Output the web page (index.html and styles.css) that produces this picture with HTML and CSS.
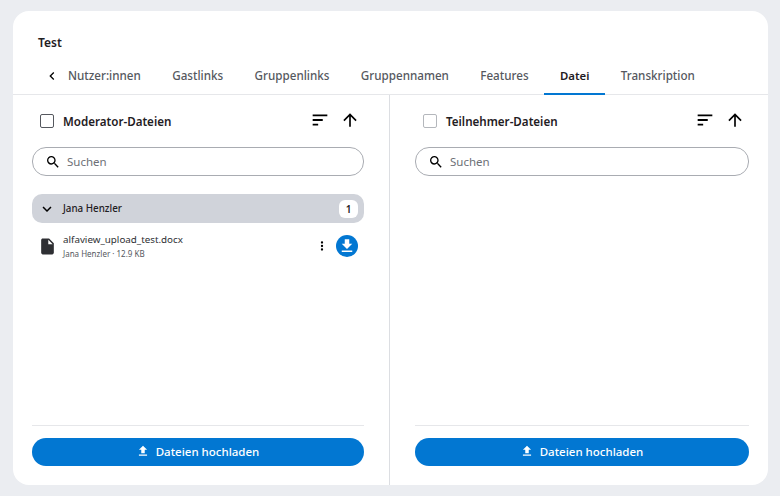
FILE: index.html
```html
<!DOCTYPE html>
<html lang="de">
<head>
    <meta charset="UTF-8">
    <meta name="viewport" content="width=device-width, initial-scale=1.0">
    <title>Test</title>
    <link rel="stylesheet" href="styles.css">
</head>
<body>
    <div class="card">
        <h1 class="card-title">Test</h1>

        <div class="tabs">
            <button class="tab-arrow">
                <svg width="16" height="16" viewBox="0 0 24 24"><path d="M15.4 7.4 14 6l-6 6 6 6 1.4-1.4L10.8 12z"/></svg>
            </button>
            <div class="tab">Nutzer:innen</div>
            <div class="tab">Gastlinks</div>
            <div class="tab">Gruppenlinks</div>
            <div class="tab">Gruppennamen</div>
            <div class="tab">Features</div>
            <div class="tab active">Datei</div>
            <div class="tab">Transkription</div>
        </div>

        <div class="panels">
            <section class="panel panel-left">
                <div class="panel-head">
                    <span class="checkbox"></span>
                    <span class="panel-title">Moderator-Dateien</span>
                    <svg class="sort-icon" width="24" height="24" viewBox="0 0 24 24"><path d="M4 6h16v2H4zM4 11h11v2H4zM4 16h6v2H4z"/></svg>
                    <svg class="up-icon" width="24" height="24" viewBox="0 0 24 24"><path d="M4 12l1.41 1.41L11 7.83V20h2V7.83l5.58 5.59L20 12l-8-8z"/></svg>
                </div>

                <div class="search">
                    <svg width="16" height="16" viewBox="0 0 24 24"><path d="M15.5 14h-.79l-.28-.27A6.47 6.47 0 0 0 16 9.5 6.5 6.5 0 1 0 9.5 16c1.61 0 3.09-.59 4.23-1.57l.27.28v.79l5 4.99L20.49 19l-4.99-5zm-6 0C7.01 14 5 11.99 5 9.5S7.01 5 9.5 5 14 7.01 14 9.5 11.99 14 9.5 14z"/></svg>
                    <span>Suchen</span>
                </div>

                <div class="file-area">
                    <div class="group-row">
                        <svg width="18" height="18" viewBox="0 0 24 24"><path d="M16.6 8.6 12 13.2 7.4 8.6 6 10l6 6 6-6z"/></svg>
                        <span class="group-name">Jana Henzler</span>
                        <span class="group-count">1</span>
                    </div>
                    <div class="file-row">
                        <svg class="file-icon" width="24" height="24" viewBox="0 0 24 24"><path d="M6 2c-1.1 0-2 .9-2 2v16c0 1.1.9 2 2 2h12c1.1 0 2-.9 2-2V8l-6-6H6zm7 7V3.5L18.5 9H13z"/></svg>
                        <div class="file-info">
                            <div class="file-name">alfaview_upload_test.docx</div>
                            <div class="file-meta">Jana Henzler · 12.9 KB</div>
                        </div>
                        <svg class="more-icon" width="14" height="14" viewBox="0 0 24 24"><path d="M12 8a2 2 0 1 0 0-4 2 2 0 0 0 0 4zm0 2a2 2 0 1 0 0 4 2 2 0 0 0 0-4zm0 6a2 2 0 1 0 0 4 2 2 0 0 0 0-4z"/></svg>
                        <span class="download-btn">
                            <svg width="18" height="18" viewBox="0 0 24 24"><path d="M19 9h-4V3H9v6H5l7 7 7-7zM5 18v2h14v-2H5z"/></svg>
                        </span>
                    </div>
                </div>

                <div class="panel-foot">
                    <button class="upload-btn">
                        <svg width="14" height="14" viewBox="0 0 24 24"><path d="M9 16h6v-6h4l-7-7-7 7h4zm-4 2h14v2H5z"/></svg>
                        Dateien hochladen
                    </button>
                </div>
            </section>

            <section class="panel">
                <div class="panel-head">
                    <span class="checkbox disabled"></span>
                    <span class="panel-title">Teilnehmer-Dateien</span>
                    <svg class="sort-icon" width="24" height="24" viewBox="0 0 24 24"><path d="M4 6h16v2H4zM4 11h11v2H4zM4 16h6v2H4z"/></svg>
                    <svg class="up-icon" width="24" height="24" viewBox="0 0 24 24"><path d="M4 12l1.41 1.41L11 7.83V20h2V7.83l5.58 5.59L20 12l-8-8z"/></svg>
                </div>

                <div class="search">
                    <svg width="16" height="16" viewBox="0 0 24 24"><path d="M15.5 14h-.79l-.28-.27A6.47 6.47 0 0 0 16 9.5 6.5 6.5 0 1 0 9.5 16c1.61 0 3.09-.59 4.23-1.57l.27.28v.79l5 4.99L20.49 19l-4.99-5zm-6 0C7.01 14 5 11.99 5 9.5S7.01 5 9.5 5 14 7.01 14 9.5 11.99 14 9.5 14z"/></svg>
                    <span>Suchen</span>
                </div>

                <div class="file-area"></div>

                <div class="panel-foot">
                    <button class="upload-btn">
                        <svg width="14" height="14" viewBox="0 0 24 24"><path d="M9 16h6v-6h4l-7-7-7 7h4zm-4 2h14v2H5z"/></svg>
                        Dateien hochladen
                    </button>
                </div>
            </section>
        </div>
    </div>
</body>
</html>
```

FILE: styles.css
```css
body {
    font-family: "Noto Sans", sans-serif;
    background-color: #ebedf1;
    color: #1f2023;
    height: 496px;
    margin: 0;
    padding: 11px 12px 11px 13px;
    box-sizing: border-box;
    overflow: hidden;
}

.card {
    background-color: white;
    border-radius: 16px;
    height: 474px;
    display: flex;
    flex-direction: column;
    overflow: hidden;
}

.card-title {
    font-size: 12px;
    font-weight: 600;
    line-height: 16px;
    margin: 0;
    padding: 24px 25px 0;
}

.tabs {
    display: flex;
    height: 37px;
    margin-top: 6px;
    padding-left: 31px;
    border-bottom: 1px solid #e6e7ea;
    flex-shrink: 0;
}

.tab-arrow {
    width: 16px;
    height: 36px;
    padding: 2px 0 0;
    margin-right: 8px;
    background: none;
    border: none;
    display: flex;
    align-items: center;
    justify-content: center;
}

.tab {
    font-size: 11.65px;
    font-weight: 500;
    color: #55585e;
    line-height: 38px;
    height: 36px;
    padding: 0 15.7px;
    white-space: nowrap;
}

.tab:first-of-type {
    padding-left: 0;
}

.tab.active {
    color: #1f2023;
    font-size: 11.4px;
    font-weight: 600;
    border-bottom: 2px solid #0277d2;
}

.panels {
    flex: 1;
    display: flex;
    min-height: 0;
}

.panel {
    flex: 1;
    display: flex;
    flex-direction: column;
    padding: 0 19px 19px 25px;
    min-width: 0;
}

.panel-left {
    flex: 0 0 377px;
    padding: 0 25px 19px 19px;
    box-sizing: border-box;
    border-right: 1px solid #dcdee2;
}

.panel-head {
    display: flex;
    align-items: center;
    height: 52px;
    padding: 0 2px 0 8px;
}

.checkbox {
    width: 12px;
    height: 12px;
    border: 1.5px solid #55585e;
    border-radius: 2px;
    margin-right: 9px;
}

.checkbox.disabled {
    border-color: #b4b7bc;
}

.panel-title {
    flex: 1;
    font-size: 11.6px;
    font-weight: 600;
}

.sort-icon {
    width: 22px;
    height: 22px;
    margin: -2px 9px 0 0;
}

.up-icon {
    width: 20px;
    height: 20px;
    margin: -2px 2px 0 0;
}

.search {
    height: 27px;
    border: 1px solid #a9acb2;
    border-radius: 14px;
    display: flex;
    align-items: center;
    gap: 6px;
    padding: 0 12px;
    font-size: 11.5px;
    color: #6d7076;
    flex-shrink: 0;
}

.file-area {
    flex: 1;
    padding-top: 18px;
}

.group-row {
    height: 29px;
    background-color: #d0d3da;
    border-radius: 10px;
    display: flex;
    align-items: center;
    padding: 0 6px;
}

.group-name {
    flex: 1;
    font-size: 9.8px;
    font-weight: 500;
    margin-left: 7px;
}

.group-count {
    width: 19px;
    height: 18px;
    background-color: white;
    border-radius: 6px;
    font-size: 10px;
    font-weight: 600;
    text-align: center;
    line-height: 18px;
}

.file-row {
    display: flex;
    align-items: center;
    height: 46px;
    padding: 0 6px 0 6px;
}

.file-icon {
    fill: #2e2f33;
    width: 19px;
    height: 19px;
    margin-right: 6px;
}

.file-info {
    flex: 1;
    min-width: 0;
}

.file-name {
    font-size: 9.8px;
    color: #2e2f33;
    line-height: 16px;
}

.file-meta {
    font-size: 8px;
    color: #55585e;
    line-height: 12px;
}

.more-icon {
    margin-right: 7px;
}

.download-btn {
    width: 22px;
    height: 22px;
    background-color: #0277d2;
    border-radius: 50%;
    display: flex;
    align-items: center;
    justify-content: center;
    fill: white;
}

.panel-foot {
    border-top: 1px solid #e6e7ea;
    padding-top: 12px;
}

.upload-btn {
    width: 100%;
    height: 28px;
    padding: 0 1px 2px 0;
    background-color: #0277d2;
    color: white;
    border: none;
    border-radius: 14px;
    font-family: inherit;
    font-size: 11.5px;
    font-weight: 500;
    display: flex;
    align-items: center;
    justify-content: center;
    gap: 6px;
    fill: white;
}
```
